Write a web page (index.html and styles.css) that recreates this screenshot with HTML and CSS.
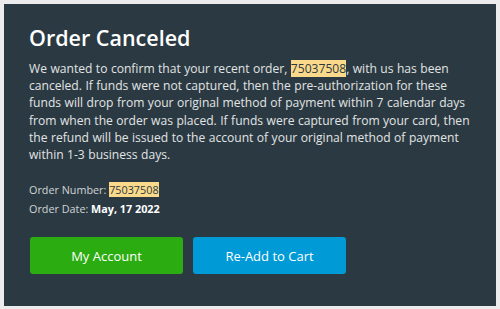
FILE: index.html
```html
<!DOCTYPE html>
<html>
<head>
<meta charset="utf-8">
<link rel="stylesheet" href="styles.css">
</head>
<body>
<div class="card">
  <h1 class="title">Order Canceled</h1>
  <p class="message">We wanted to confirm that your recent order, <span class="hl">75037508</span>, with us has been canceled. If funds were not captured, then the pre-authorization for these funds will drop from your original method of payment within 7 calendar days from when the order was placed. If funds were captured from your card, then the refund will be issued to the account of your original method of payment within 1-3 business days.</p>
  <div class="meta">
    <div class="meta-row">Order Number: <span class="hl">75037508</span></div>
    <div class="meta-row">Order Date: <strong>May, 17 2022</strong></div>
  </div>
  <div class="actions">
    <a class="btn btn-green">My Account</a>
    <a class="btn btn-blue">Re-Add to Cart</a>
  </div>
</div>
</body>
</html>
```
FILE: styles.css
```css
html, body {
  margin: 0;
  padding: 0;
}
body {
  background: #ececec;
  padding: 4px;
  width: 500px;
  height: 309px;
  box-sizing: border-box;
  font-family: "Open Sans", sans-serif;
}
.card {
  background: #2b3a42;
  height: 302px;
  box-sizing: border-box;
  padding: 20px 25px 0 25px;
  color: #e2e4e5;
}
.title {
  margin: 0;
  font-size: 21.5px;
  font-weight: 600;
  line-height: 28px;
  color: #ffffff;
}
.message {
  margin: 8px 0 0 0;
  font-size: 12.1px;
  line-height: 17.2px;
  word-spacing: 0.3px;
}
.hl {
  background: #fbd98a;
  color: #2b3a42;
}
.meta {
  margin-top: 17px;
  font-size: 10.8px;
  line-height: 19px;
  color: #d0d4d6;
}
.meta strong {
  color: #ffffff;
  font-weight: 700;
}
.actions {
  display: flex;
  gap: 10px;
  margin-top: 19px;
  padding-left: 1px;
}
.btn {
  width: 153px;
  height: 37px;
  border-radius: 3px;
  display: flex;
  align-items: center;
  justify-content: center;
  color: #ffffff;
  font-size: 13px;
}
.btn-green {
  background: #2bac10;
}
.btn-blue {
  background: #009ad6;
}
```
